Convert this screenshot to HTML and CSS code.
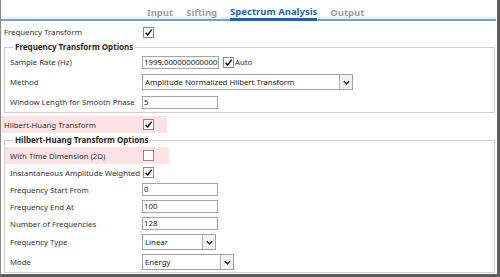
FILE: index.html
```html
<!DOCTYPE html>
<html lang="en">
<head>
    <meta charset="UTF-8">
    <title>Spectrum Analysis</title>
    <link rel="stylesheet" href="styles.css">
</head>
<body>
    <div class="window">
        <div class="tabs">
            <span class="tab">Input</span>
            <span class="tab">Sifting</span>
            <span class="tab active">Spectrum Analysis</span>
            <span class="tab">Output</span>
        </div>

        <div class="row top">
            <span class="label">Frequency Transform</span>
            <span class="check on"><svg viewBox="0 0 10 10"><path d="M1.8 5.2 L4 7.8 L8.6 1.8"/></svg></span>
        </div>

        <fieldset class="group">
            <legend>Frequency Transform Options</legend>
            <div class="row">
                <span class="label">Sample Rate (Hz)</span>
                <span class="field w76">1999.000000000000</span>
                <span class="check on"><svg viewBox="0 0 10 10"><path d="M1.8 5.2 L4 7.8 L8.6 1.8"/></svg></span>
                <span class="aside">Auto</span>
            </div>
            <div class="row">
                <span class="label">Method</span>
                <span class="select w211"><span class="value">Amplitude Normalized Hilbert Transform</span><span class="arrow"><svg viewBox="0 0 10 10"><path d="M2 3.5 L5 6.5 L8 3.5"/></svg></span></span>
            </div>
            <div class="row">
                <span class="label">Window Length for Smooth Phase</span>
                <span class="field w75">5</span>
            </div>
        </fieldset>

        <div class="row top flagged">
            <span class="label">Hilbert-Huang Transform</span>
            <span class="check on"><svg viewBox="0 0 10 10"><path d="M1.8 5.2 L4 7.8 L8.6 1.8"/></svg></span>
        </div>

        <fieldset class="group second">
            <legend>Hilbert-Huang Transform Options</legend>
            <div class="row short flagged">
                <span class="label">With Time Dimension (2D)</span>
                <span class="check"></span>
            </div>
            <div class="row short">
                <span class="label">Instantaneous Amplitude Weighted</span>
                <span class="check on"><svg viewBox="0 0 10 10"><path d="M1.8 5.2 L4 7.8 L8.6 1.8"/></svg></span>
            </div>
            <div class="row short">
                <span class="label">Frequency Start From</span>
                <span class="field w75">0</span>
            </div>
            <div class="row short">
                <span class="label">Frequency End At</span>
                <span class="field w75">100</span>
            </div>
            <div class="row short">
                <span class="label">Number of Frequencies</span>
                <span class="field w75">128</span>
            </div>
            <div class="row">
                <span class="label">Frequency Type</span>
                <span class="select w73"><span class="value">Linear</span><span class="arrow"><svg viewBox="0 0 10 10"><path d="M2 3.5 L5 6.5 L8 3.5"/></svg></span></span>
            </div>
            <div class="row">
                <span class="label">Mode</span>
                <span class="select w91"><span class="value">Energy</span><span class="arrow"><svg viewBox="0 0 10 10"><path d="M2 3.5 L5 6.5 L8 3.5"/></svg></span></span>
            </div>
        </fieldset>
    </div>
</body>
</html>
```

FILE: styles.css
```css
html, body {
    margin: 0;
    padding: 0;
    background: white;
}

body {
    font-family: 'Noto Sans', 'Open Sans', sans-serif;
    font-size: 7.8px;
    color: #333;
}

.window {
    box-sizing: border-box;
    width: 500px;
    height: 277px;
    border-left: 1px solid #8a8a8a;
    border-right: 3px solid #5c5c5c;
    border-bottom: 3px solid #5c5c5c;
    overflow: hidden;
}

/* tab strip */
.tabs {
    box-sizing: border-box;
    height: 21px;
    display: flex;
    align-items: flex-end;
    gap: 13px;
    padding-left: 146px;
    margin-right: 1px;
    border-bottom: 2px solid #6aa3de;
    background: linear-gradient(to bottom, #fff 0, #fff 16px, #f1f1f1 17px);
}

.tab {
    font-size: 9.5px;
    font-weight: 700;
    line-height: 12px;
    color: #a2a2a2;
    padding-bottom: 0;
}

.tab.active {
    color: #1a63b8;
    border-bottom: 3px solid #1a63b8;
    margin-bottom: -2px;
    padding-bottom: 0;
}

/* rows */
.row {
    display: flex;
    align-items: center;
    height: 20px;
    padding-left: 5px;
}

.row.short {
    height: 17px;
}

.row.top {
    padding-left: 3px;
    height: 18px;
    margin-top: 2px;
}

.row.top.flagged {
    width: 163px;
    height: 17px;
    margin-top: 3px;
}

.flagged {
    background: #fde3e3;
}

.label {
    width: 132px;
    flex: none;
    white-space: nowrap;
}

.row.top .label {
    width: 138px;
}

.aside {
    margin-left: 1px;
}

/* group boxes */
.group {
    margin: 1px 2px 0 3px;
    padding: 0;
    border: 1px solid #cfcfcf;
    box-shadow: inset 1px 1px 0 #fff;
}

.group legend {
    font-weight: 700;
    font-size: 8px;
    line-height: 10px;
    color: #1f1f1f;
    padding: 0 2px;
    margin-left: 8px;
}

.group.second {
    margin-top: 2px;
}

.group.second .row.short:first-of-type {
    margin-top: 2px;
    width: 159px;
}

/* controls */
.check {
    box-sizing: border-box;
    width: 11px;
    height: 11px;
    flex: none;
    border: 1px solid #8c8c8c;
    background: #fff;
    margin-left: 1px;
}

.check svg {
    display: block;
    width: 9px;
    height: 9px;
    fill: none;
    stroke: #111;
    stroke-width: 1.7;
}

.field {
    box-sizing: border-box;
    height: 13px;
    line-height: 11px;
    border: 1px solid #a5a5a5;
    padding-left: 1px;
    background: #fff;
    color: #222;
    white-space: nowrap;
    overflow: hidden;
    flex: none;
    margin-right: 3px;
}

.select {
    box-sizing: border-box;
    display: flex;
    height: 16px;
    border: 1px solid #a0a0a0;
    background: #fff;
    color: #222;
    flex: none;
}

.select .value {
    flex: 1;
    line-height: 14px;
    padding-left: 2px;
    white-space: nowrap;
    overflow: hidden;
}

.select .arrow {
    width: 12px;
    border-left: 1px solid #b4b4b4;
    background: #f2f2f2;
    display: flex;
    align-items: center;
    justify-content: center;
}

.select .arrow svg {
    width: 9px;
    height: 9px;
    fill: none;
    stroke: #222;
    stroke-width: 1.5;
}

.w76 { width: 77px; }
.w75 { width: 76px; }
.w211 { width: 211px; }
.w73 { width: 74px; }
.w91 { width: 92px; }
```
